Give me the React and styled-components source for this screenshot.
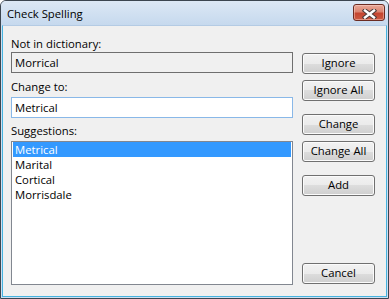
import React from "react";
import styled, { createGlobalStyle } from "styled-components";

const Global = createGlobalStyle`
  html, body { margin: 0; padding: 0; background: #ffffff; }
  * { box-sizing: border-box; }
`;

const font = `"Segoe UI", "Open Sans", "Noto Sans", sans-serif`;

const Window = styled.div`
  width: 389px;
  height: 299px;
  display: flex;
  flex-direction: column;
  border: 1px solid #3c4650;
  border-radius: 6px 6px 0 0;
  background: #cddff2;
  padding: 0 1px 1px 1px;
  font-family: ${font};
  font-size: 11.3px;
  line-height: 15px;
  color: #000;
  overflow: hidden;
`;

const TitleBar = styled.div`
  height: 24px;
  flex: none;
  display: flex;
  align-items: center;
  padding-left: 6px;
  margin: 0 -1px;
  background: linear-gradient(#dce8f5, #c6d9ee);
`;

const Title = styled.div`
  flex: 1;
  color: #000;
`;

const CloseButton = styled.div`
  align-self: flex-start;
  margin: 3px 3px 0 0;
  width: 32px;
  height: 17px;
  border: 1px solid #6b2c22;
  border-radius: 3px;
  background: linear-gradient(#e9a898 0%, #da8470 45%, #c4452f 55%, #cc5a42 100%);
  box-shadow: inset 0 0 0 1px rgba(255, 220, 210, 0.45);
  display: flex;
  align-items: center;
  justify-content: center;
  padding-top: 2px;
`;

const Client = styled.div`
  flex: 1;
  display: flex;
  gap: 9px;
  background: #f0f0f0;
  border: 1px solid #46b3df;
  border-top-color: #b4cbe4;
  padding: 0 11px 11px 8px;
`;

const LeftColumn = styled.div`
  width: 282px;
  display: flex;
  flex-direction: column;
`;

const Label = styled.div`
  height: 15px;
  margin-top: ${(p) => p.$top}px;
  white-space: nowrap;
`;

const Field = styled.div`
  height: 21px;
  margin-top: ${(p) => p.$top}px;
  border: 1px solid ${(p) => (p.$readOnly ? "#6f6f6f" : "#89b8e8")};
  background: ${(p) => (p.$readOnly ? "#f0f0f0" : "#ffffff")};
  padding: 2px 3px;
  white-space: nowrap;
`;

const List = styled.div`
  flex: 1;
  margin-top: 3px;
  border: 1px solid #828790;
  background: #ffffff;
  padding: 0 1px;
`;

const ListItem = styled.div`
  height: 15px;
  padding-left: 2px;
  background: ${(p) => (p.$selected ? "#3399ff" : "transparent")};
  color: ${(p) => (p.$selected ? "#ffffff" : "#000000")};
  white-space: nowrap;
`;

const RightColumn = styled.div`
  width: 73px;
  display: flex;
  flex-direction: column;
  padding-top: 27px;
`;

const Button = styled.div`
  height: 21px;
  margin-top: ${(p) => (p.$push ? "auto" : `${p.$top || 0}px`)};
  margin-bottom: ${(p) => (p.$push ? "1px" : "0")};
  border: 1px solid #707070;
  border-radius: 3px;
  background: linear-gradient(#f2f2f2 0%, #ebebeb 50%, #dddddd 50%, #cfcfcf 100%);
  box-shadow: inset 0 0 0 1px #fbfbfb;
  display: flex;
  align-items: center;
  justify-content: center;
  padding-bottom: 2px;
  white-space: nowrap;
`;

const CloseX = () => (
  <svg width="15" height="10" viewBox="0 0 15 10">
    <path d="M3 1.5 L12 8.5 M12 1.5 L3 8.5" stroke="#4a3b38" strokeWidth="4.4" strokeLinecap="square" fill="none" />
    <path d="M3 1.5 L12 8.5 M12 1.5 L3 8.5" stroke="#ffffff" strokeWidth="2.4" strokeLinecap="square" fill="none" />
  </svg>
);

const suggestions = ["Metrical", "Marital", "Cortical", "Morrisdale"];

export default function App() {
  return (
    <>
      <Global />
      <Window>
        <TitleBar>
          <Title>Check Spelling</Title>
          <CloseButton>
            <CloseX />
          </CloseButton>
        </TitleBar>
        <Client>
          <LeftColumn>
            <Label $top={10}>Not in dictionary:</Label>
            <Field $top={1} $readOnly>Morrical</Field>
            <Label $top={6}>Change to:</Label>
            <Field $top={3}>Metrical</Field>
            <Label $top={5}>Suggestions:</Label>
            <List>
              {suggestions.map((s, i) => (
                <ListItem key={s} $selected={i === 0}>{s}</ListItem>
              ))}
            </List>
          </LeftColumn>
          <RightColumn>
            <Button>Ignore</Button>
            <Button $top={6}>Ignore All</Button>
            <Button $top={13}>Change</Button>
            <Button $top={6}>Change All</Button>
            <Button $top={13}>Add</Button>
            <Button $push>Cancel</Button>
          </RightColumn>
        </Client>
      </Window>
    </>
  );
}
